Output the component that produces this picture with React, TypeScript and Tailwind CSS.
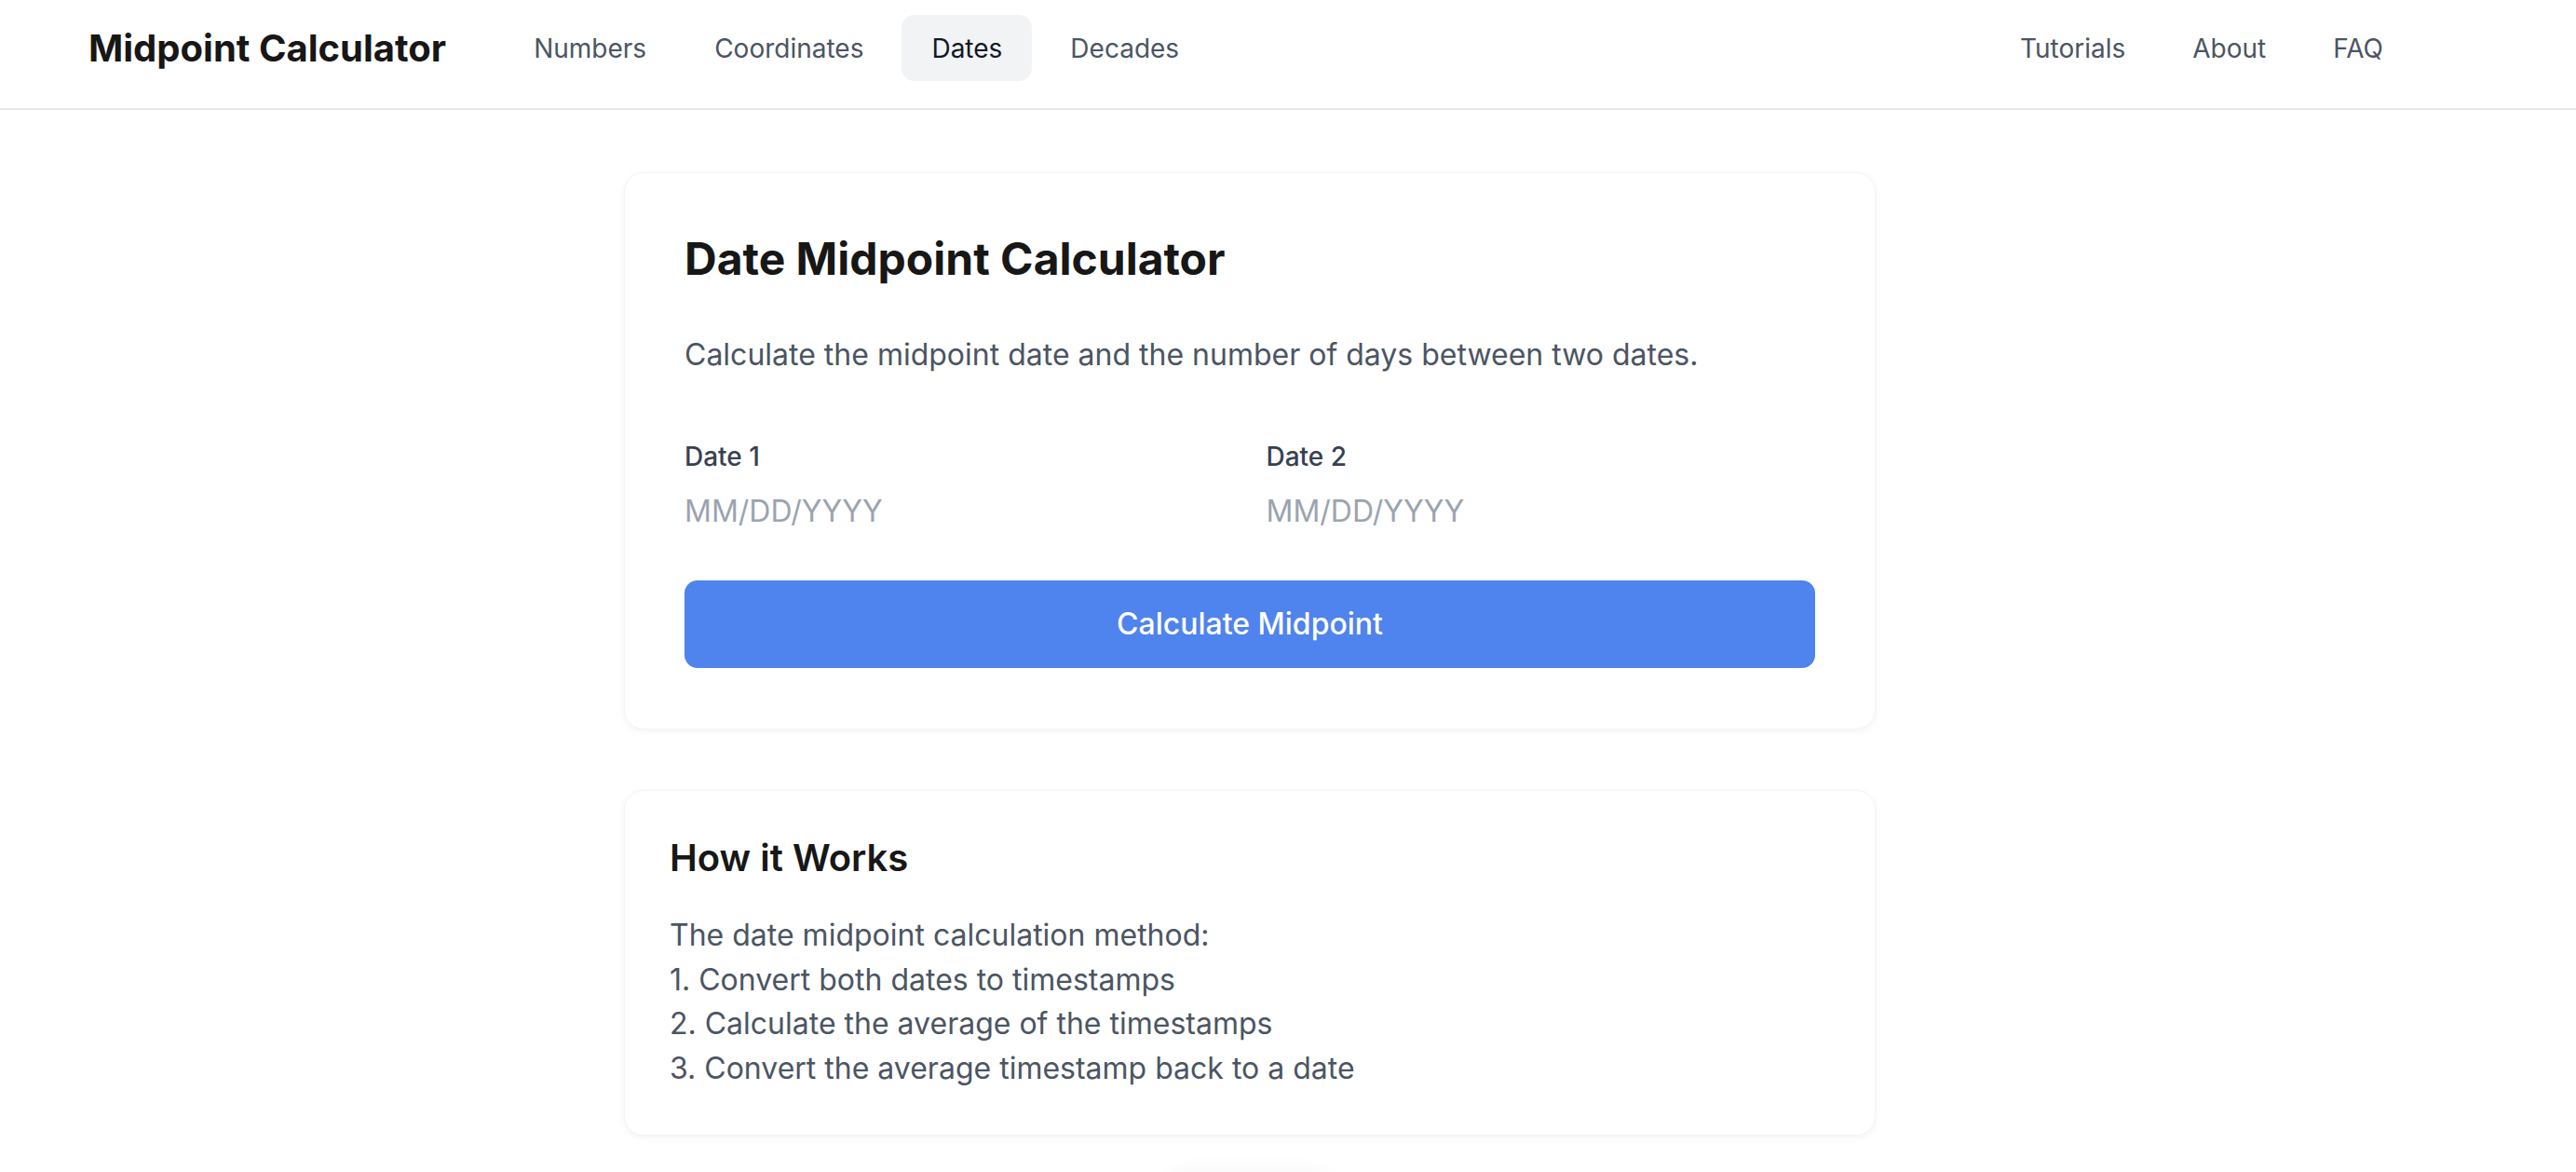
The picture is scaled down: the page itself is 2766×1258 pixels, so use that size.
const NAV_LEFT = ["Numbers", "Coordinates", "Dates", "Decades"];
const NAV_RIGHT = ["Tutorials", "About", "FAQ"];

const STEPS = [
  "The date midpoint calculation method:",
  "1. Convert both dates to timestamps",
  "2. Calculate the average of the timestamps",
  "3. Convert the average timestamp back to a date",
];

function NavLink({ label, active }: { label: string; active?: boolean }) {
  return (
    <a
      href="#"
      className={`flex h-[71px] items-center rounded-[14px] px-[32px] text-[28px] ${
        active ? "bg-[#f2f3f5] text-[#111827]" : "text-[#4b5563]"
      }`}
    >
      {label}
    </a>
  );
}

function DateField({ label }: { label: string }) {
  return (
    <div className="flex flex-col">
      <label className="text-[28px] leading-[42px] font-medium text-[#374151]">{label}</label>
      <input
        type="text"
        placeholder="MM/DD/YYYY"
        className="mt-[7px] h-[60px] w-full bg-transparent text-[32px] text-[#111827] outline-none placeholder:text-[#9ca3af]"
      />
    </div>
  );
}

export default function App() {
  return (
    <div className="min-h-screen bg-white font-['Inter',sans-serif]">
      <header className="border-b-2 border-[#e5e7eb]">
        <div className="flex w-[2684px] items-center justify-between pt-[16px] pr-[93px] pb-[29px] pl-[95px]">
          <div className="flex items-center">
            <h1 className="text-[40px] leading-[56px] font-bold text-[#171717]">Midpoint Calculator</h1>
            <nav className="ml-[62px] flex items-center gap-[9px]">
              {NAV_LEFT.map((item) => (
                <NavLink key={item} label={item} active={item === "Dates"} />
              ))}
            </nav>
          </div>
          <nav className="flex items-center gap-[8px]">
            {NAV_RIGHT.map((item) => (
              <NavLink key={item} label={item} />
            ))}
          </nav>
        </div>
      </header>

      <main className="flex w-[2684px] flex-col items-center pt-[67px]">
        <section className="w-[1344px] rounded-[21px] border border-[#f3f4f6] bg-white px-[64px] pt-[64px] pb-[65px] shadow-[0_2px_8px_rgba(0,0,0,0.05)]">
          <h2 className="text-[48px] leading-[56px] font-bold text-[#171717]">Date Midpoint Calculator</h2>
          <p className="mt-[50px] text-[32px] leading-[49px] text-[#4b5563]">
            Calculate the midpoint date and the number of days between two dates.
          </p>
          <div className="mt-[64px] grid grid-cols-2 gap-[35px]">
            <DateField label="Date 1" />
            <DateField label="Date 2" />
          </div>
          <button className="mt-[45px] h-[94px] w-full rounded-[14px] bg-[#4f83ed] text-[32px] font-medium text-white">
            Calculate Midpoint
          </button>
        </section>

        <section className="mt-[65px] w-[1344px] rounded-[21px] border border-[#f3f4f6] bg-white px-[48px] pt-[47px] pb-[48px] shadow-[0_2px_8px_rgba(0,0,0,0.05)]">
          <h3 className="text-[40px] leading-[49px] font-semibold text-[#171717]">How it Works</h3>
          <div className="mt-[35px] text-[32px] leading-[47.6px] text-[#4b5563]">
            {STEPS.map((line) => (
              <p key={line}>{line}</p>
            ))}
          </div>
        </section>

        <div className="mt-[44px] h-[60px] w-[180px] rounded-full bg-white shadow-[0_0_30px_rgba(0,0,0,0.06)]" />
      </main>
    </div>
  );
}
